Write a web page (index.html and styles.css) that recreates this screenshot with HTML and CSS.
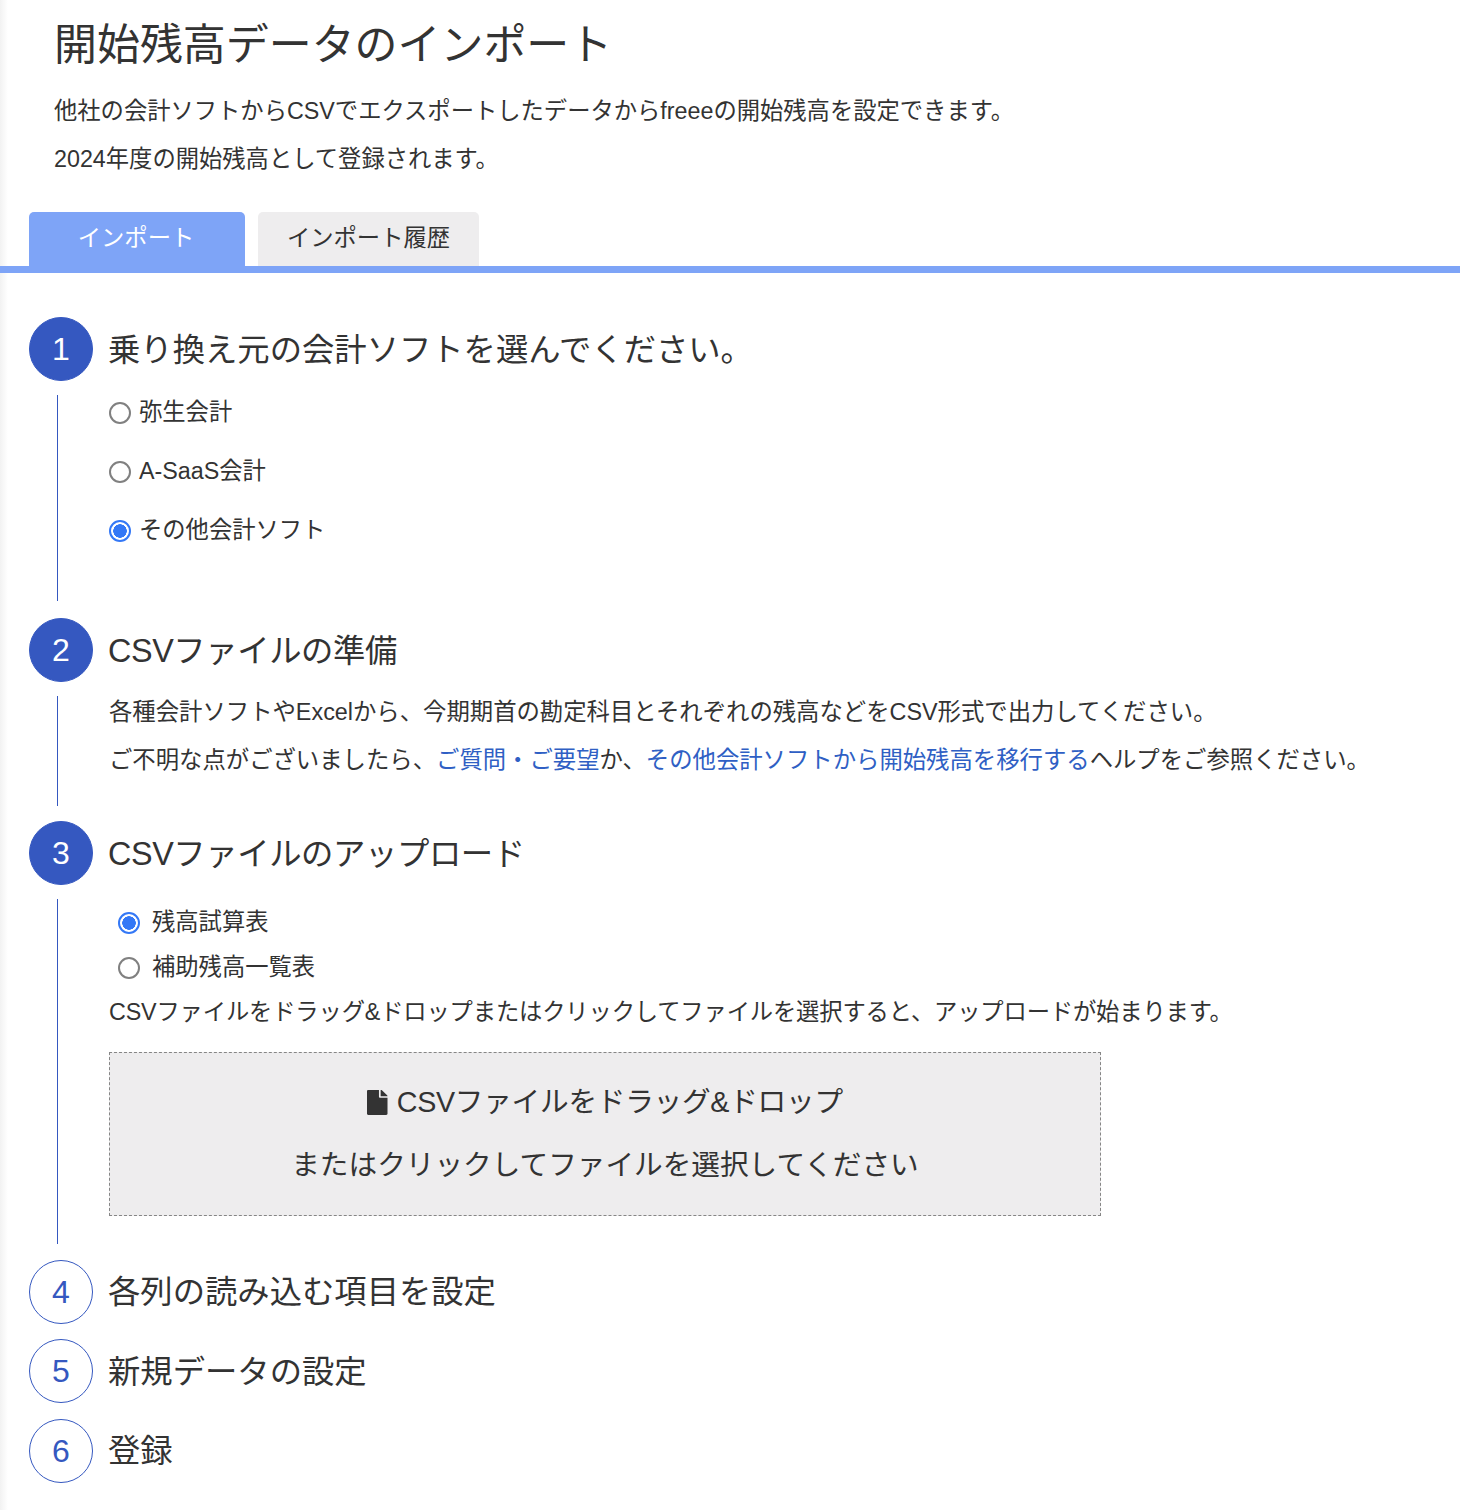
FILE: index.html
```html
<!DOCTYPE html>
<html lang="ja">
<head>
<meta charset="utf-8">
<title>開始残高データのインポート</title>
<link rel="stylesheet" href="styles.css">
</head>
<body>
<header class="intro">
  <h1 class="page-title">開始残高データのインポート</h1>
  <p class="intro-line">他社の会計ソフトからCSVでエクスポートしたデータからfreeeの開始残高を設定できます。</p>
  <p class="intro-line">2024年度の開始残高として登録されます。</p>
</header>
<nav class="tabs">
  <a class="tab tab-active">インポート</a>
  <a class="tab tab-muted">インポート履歴</a>
</nav>
<main class="steps">
  <section class="step">
    <div class="step-head"><span class="num num-on">1</span><h2 class="step-title">乗り換え元の会計ソフトを選んでください。</h2></div>
    <div class="step-body body-one">
      <label class="choice"><input type="radio" name="soft"><span class="choice-text">弥生会計</span></label>
      <label class="choice"><input type="radio" name="soft"><span class="choice-text">A-SaaS会計</span></label>
      <label class="choice"><input type="radio" name="soft" checked><span class="choice-text">その他会計ソフト</span></label>
    </div>
  </section>
  <section class="step">
    <div class="step-head"><span class="num num-on">2</span><h2 class="step-title tight">CSVファイルの準備</h2></div>
    <div class="step-body body-two">
      <p class="para">各種会計ソフトやExcelから、今期期首の勘定科目とそれぞれの残高などをCSV形式で出力してください。</p>
      <p class="para">ご不明な点がございましたら、<a class="link">ご質問・ご要望</a>か、<a class="link">その他会計ソフトから開始残高を移行する</a>ヘルプをご参照ください。</p>
    </div>
  </section>
  <section class="step">
    <div class="step-head"><span class="num num-on">3</span><h2 class="step-title tight">CSVファイルのアップロード</h2></div>
    <div class="step-body body-three">
      <label class="choice-small"><input type="radio" name="kind" checked><span class="choice-text">残高試算表</span></label>
      <label class="choice-small"><input type="radio" name="kind"><span class="choice-text">補助残高一覧表</span></label>
      <p class="hint">CSVファイルをドラッグ&amp;ドロップまたはクリックしてファイルを選択すると、アップロードが始まります。</p>
      <div class="drop">
        <p class="drop-line drop-lead"><svg class="file-icon" viewBox="0 0 384 512" preserveAspectRatio="none" aria-hidden="true"><path d="M224 136V0H24C10.7 0 0 10.7 0 24v464c0 13.3 10.7 24 24 24h336c13.3 0 24-10.7 24-24V160H248c-13.2 0-24-10.8-24-24zm160-14.1v6.1H256V0h6.1c6.4 0 12.5 2.5 17 7l97.9 98c4.5 4.5 7 10.6 7 16.9z"/></svg>CSVファイルをドラッグ&amp;ドロップ</p>
        <p class="drop-line">またはクリックしてファイルを選択してください</p>
      </div>
    </div>
  </section>
  <section class="step">
    <div class="step-head"><span class="num">4</span><h2 class="step-title">各列の読み込む項目を設定</h2></div>
  </section>
  <section class="step">
    <div class="step-head"><span class="num">5</span><h2 class="step-title">新規データの設定</h2></div>
  </section>
  <section class="step">
    <div class="step-head"><span class="num">6</span><h2 class="step-title">登録</h2></div>
  </section>
</main>
</body>
</html>
```
FILE: styles.css
```css
* { box-sizing: border-box; }
html, body { margin: 0; padding: 0; }
body {
  width: 1460px;
  height: 1510px;
  overflow: hidden;
  color: #333;
  font-family: "Liberation Sans", "Noto Sans CJK JP", sans-serif;
  font-size: 23.3px;
  background: linear-gradient(to right, #f2f2f2, #fff 8px);
}
p, h1, h2 { margin: 0; font-weight: 400; }
.intro { padding: 13px 0 0 54px; height: 182px; }
.page-title { font-size: 42.95px; line-height: 64px; }
.intro-line { line-height: 48px; }
.intro-line:first-of-type { margin-top: 10px; }
.tabs {
  display: flex;
  gap: 13px;
  margin-top: 30px;
  padding-left: 29px;
  border-bottom: 7px solid #7ea4f7;
}
.tab {
  height: 54px;
  line-height: 53px;
  text-align: center;
  border-radius: 5px 5px 0 0;
}
.tab-active { width: 216px; padding-right: 2px; background: #7ea4f7; color: #fff; }
.tab-muted { width: 221px; background: #eeedee; }
.steps {
  display: flex;
  flex-direction: column;
  gap: 15.5px;
  padding: 44px 0 0 29px;
}
.step-head { display: flex; align-items: center; gap: 15px; height: 64px; }
.num {
  flex: none;
  width: 64px;
  height: 64px;
  border: 1.5px solid #3558c0;
  border-radius: 50%;
  color: #3558c0;
  font-size: 32px;
  line-height: 63px;
  text-align: center;
}
.num-on { background: #3558c0; color: #fff; }
.step-title { font-size: 32.35px; line-height: 44px; padding-top: 1px; }
.tight { letter-spacing: -0.38px; }
.step-body {
  margin: 14px 0 0 28px;
  padding-left: 51px;
  border-left: 1.5px solid #3558c0;
}
.body-one { height: 206px; margin-bottom: 1.5px; }
.body-two { height: 109.5px; padding-top: 1px; }
.body-three { height: 345px; }
.choice { display: flex; align-items: center; gap: 8px; height: 32px; margin-bottom: 27px; }
.choice-small { display: flex; align-items: center; gap: 12px; height: 45px; padding-left: 9px; }
.choice-text { margin-bottom: 3px; }
input[type="radio"] {
  appearance: none;
  flex: none;
  width: 22px;
  height: 22px;
  margin: 3px 0 0;
  border: 2px solid #808080;
  border-radius: 50%;
  background: #fff;
}
input[type="radio"]:checked {
  border-color: #3478f6;
  background: radial-gradient(circle, #3478f6 0 6.5px, #fff 7px);
}
.para { font-size: 23.37px; line-height: 30px; margin-bottom: 18px; }
.link { color: #2f5fc4; }
.hint { line-height: 45px; padding-top: 1px; letter-spacing: -0.15px; }
.drop {
  width: 992px;
  height: 164px;
  margin-top: 17px;
  border: 1px dashed #868686;
  background: #eeedee;
  padding-top: 18px;
  text-align: center;
  font-size: 28.65px;
}
.drop-line { line-height: 63px; }
.drop-lead { letter-spacing: -0.25px; }
.file-icon { width: 20.5px; height: 25px; margin-right: 9px; vertical-align: -3px; fill: #333; }
```
